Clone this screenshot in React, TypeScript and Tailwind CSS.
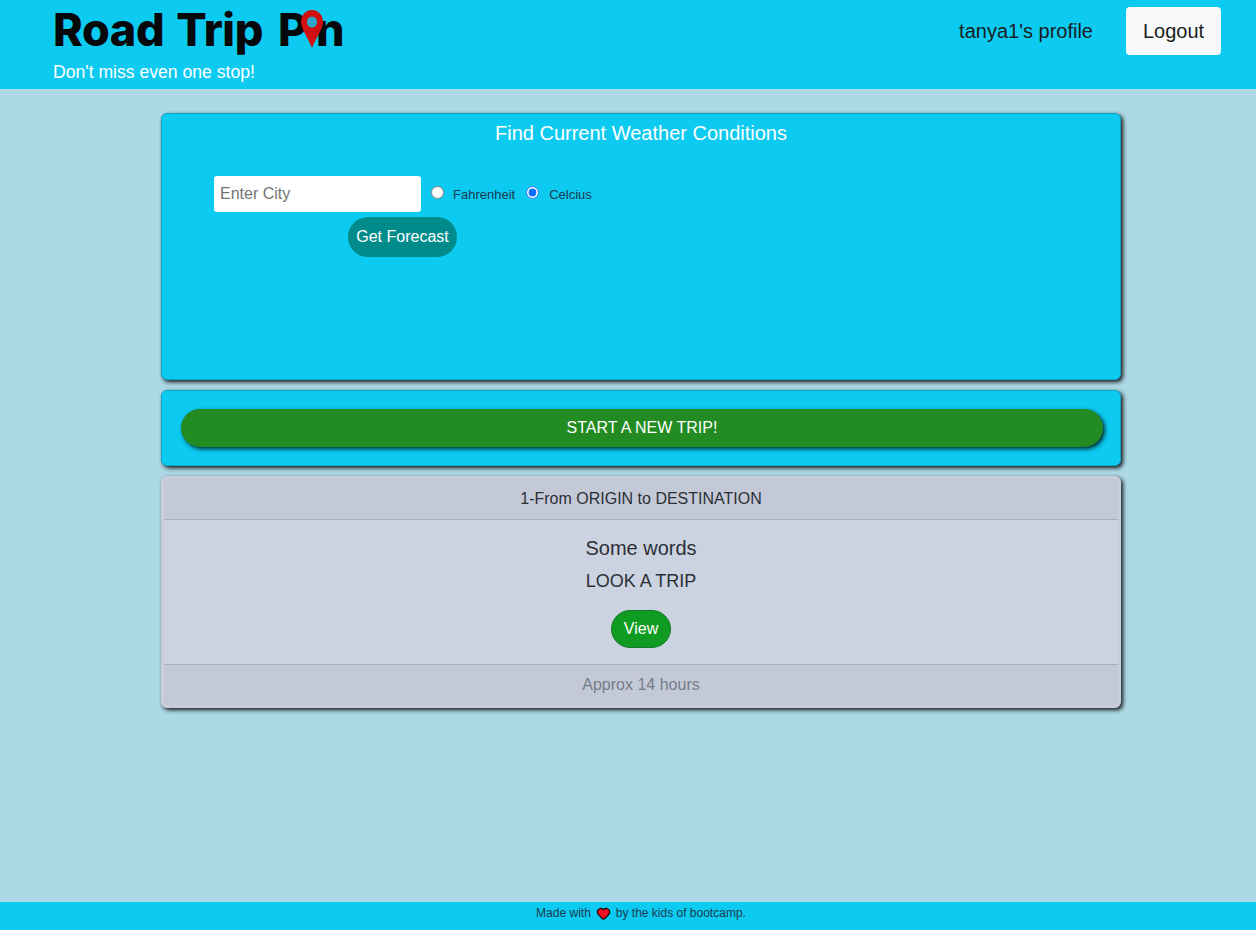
import { Heart } from "lucide-react";

const font = "font-['Liberation_Sans',Arial,sans-serif]";
const cardShadow = "shadow-[2px_2px_4px_rgba(0,0,0,0.9)]";

function Logo() {
  return (
    <div className="relative h-[55px] pt-[6px]">
      <div className="flex items-start font-['Inter',sans-serif] font-extrabold text-[45px] leading-[48px] text-[#05070a] tracking-[-0.4px]">
        <span>Road</span>
        <span className="ml-[12px]">Trip</span>
        <span className="ml-[15px]">P</span>
        <span className="ml-[9px]">n</span>
      </div>
      <svg
        className="absolute left-[248px] top-[10px]"
        width="22"
        height="38"
        viewBox="0 0 24 38"
        preserveAspectRatio="none"
      >
        <path
          fill="#d01010"
          d="M12 0C5 0 0 5.300 0 12c0 6.500 6.500 14 12 26 5.500-12 12-19.500 12-26C24 5.300 19 0 12 0Z"
        />
        <circle cx="12" cy="12" r="5.500" fill="#2aa6c8" />
      </svg>
    </div>
  );
}

function WeatherCard() {
  return (
    <section
      className={`h-[267px] w-[960px] rounded-md bg-[#0dcaf0] border border-[#0aa5c5] ${cardShadow}`}
    >
      <h2 className="pt-[7px] text-center text-[20px] leading-[24px] text-white">
        Find Current Weather Conditions
      </h2>
      <div className="ml-[52px] mt-[31px] w-[400px]">
        <div className="flex items-center">
          <input
            placeholder="Enter City"
            className="h-[36px] w-[207px] rounded-[3px] bg-white px-[6px] text-[16px] text-gray-800 placeholder:text-[#757575]"
          />
          <input
            type="radio"
            name="unit"
            className="ml-[10px] mb-[3px] h-[13px] w-[13px] accent-[#0d6efd]"
          />
          <label className="ml-[9px] mt-[2px] text-[13px] text-[#1c3a50]">
            Fahrenheit
          </label>
          <input
            type="radio"
            name="unit"
            defaultChecked
            className="ml-[11px] mb-[3px] h-[13px] w-[13px] accent-[#0d6efd]"
          />
          <label className="ml-[10px] mt-[2px] text-[13px] text-[#1c3a50]">
            Celcius
          </label>
        </div>
        <div className="mt-[5px] pl-[134px]">
          <button className="h-[40px] w-[109px] rounded-[20px] bg-[#008b8b] text-[16px] text-white">
            Get Forecast
          </button>
        </div>
      </div>
    </section>
  );
}

function NewTripCard() {
  return (
    <section
      className={`h-[76px] w-[960px] rounded-md bg-[#0dcaf0] border border-[#0aa5c5] px-[19px] pt-[18px] ${cardShadow}`}
    >
      <button className="h-[38px] w-[922px] rounded-[19px] bg-[#228b22] text-[16px] text-white shadow-[2px_2px_4px_rgba(0,0,0,0.8)]">
        START A NEW TRIP!
      </button>
    </section>
  );
}

function TripCard() {
  return (
    <section
      className={`h-[232px] w-[960px] rounded-md bg-[#cbd2e0] border-[3px] border-[#c8cedb] text-[#2b3036] ${cardShadow}`}
    >
      <div className="h-[41px] border-b border-[#a9afbd] bg-[#c3c9d7] text-center text-[16px] leading-[39px]">
        1-From ORIGIN to DESTINATION
      </div>
      <div className="h-[144px] pt-[16px] text-center">
        <h3 className="text-[20px] leading-[24px]">Some words</h3>
        <p className="mt-[9px] text-[18px] leading-[24px]">LOOK A TRIP</p>
        <button className="mt-[17px] h-[38px] w-[60px] rounded-[19px] border border-[#157a2a] bg-[#109c22] text-[16px] text-white">
          View
        </button>
      </div>
      <div className="h-[41px] border-t border-[#a9afbd] bg-[#c3c9d7] text-center text-[16px] leading-[40px] text-[#757c88]">
        Approx 14 hours
      </div>
    </section>
  );
}

export default function App() {
  return (
    <div className={`flex h-[930px] flex-col bg-[#add8e6] ${font}`}>
      <header className="flex h-[89px] justify-between bg-[#0dcaf0] pl-[53px] pr-[35px]">
        <div>
          <Logo />
          <div className="mt-[6px] text-[17.6px] leading-[22px] text-white">
            Don&apos;t miss even one stop!
          </div>
        </div>
        <div className="flex items-start pt-[7px]">
          <a className="mr-[33px] mt-[12px] text-[20px] leading-[24px] text-[#1a1d20]">
            tanya1&apos;s profile
          </a>
          <button className="h-[48px] w-[95px] rounded-[4px] bg-[#f8f9fa] text-[20px] text-[#1a1d20]">
            Logout
          </button>
        </div>
      </header>

      <main className="flex flex-1 flex-col items-center gap-[10px] pl-[26px] pt-[24px]">
        <WeatherCard />
        <NewTripCard />
        <TripCard />
      </main>

      <footer className="flex h-[28px] items-start justify-center bg-[#0dcaf0] pl-[26px] pt-[4px] text-[12px] leading-[15px] text-[#1c3a50]">
        Made with
        <Heart
          size={15}
          fill="#ee1122"
          stroke="#220000"
          strokeWidth={2}
          className="mx-[5px]"
        />
        by the kids of bootcamp.
      </footer>
    </div>
  );
}
